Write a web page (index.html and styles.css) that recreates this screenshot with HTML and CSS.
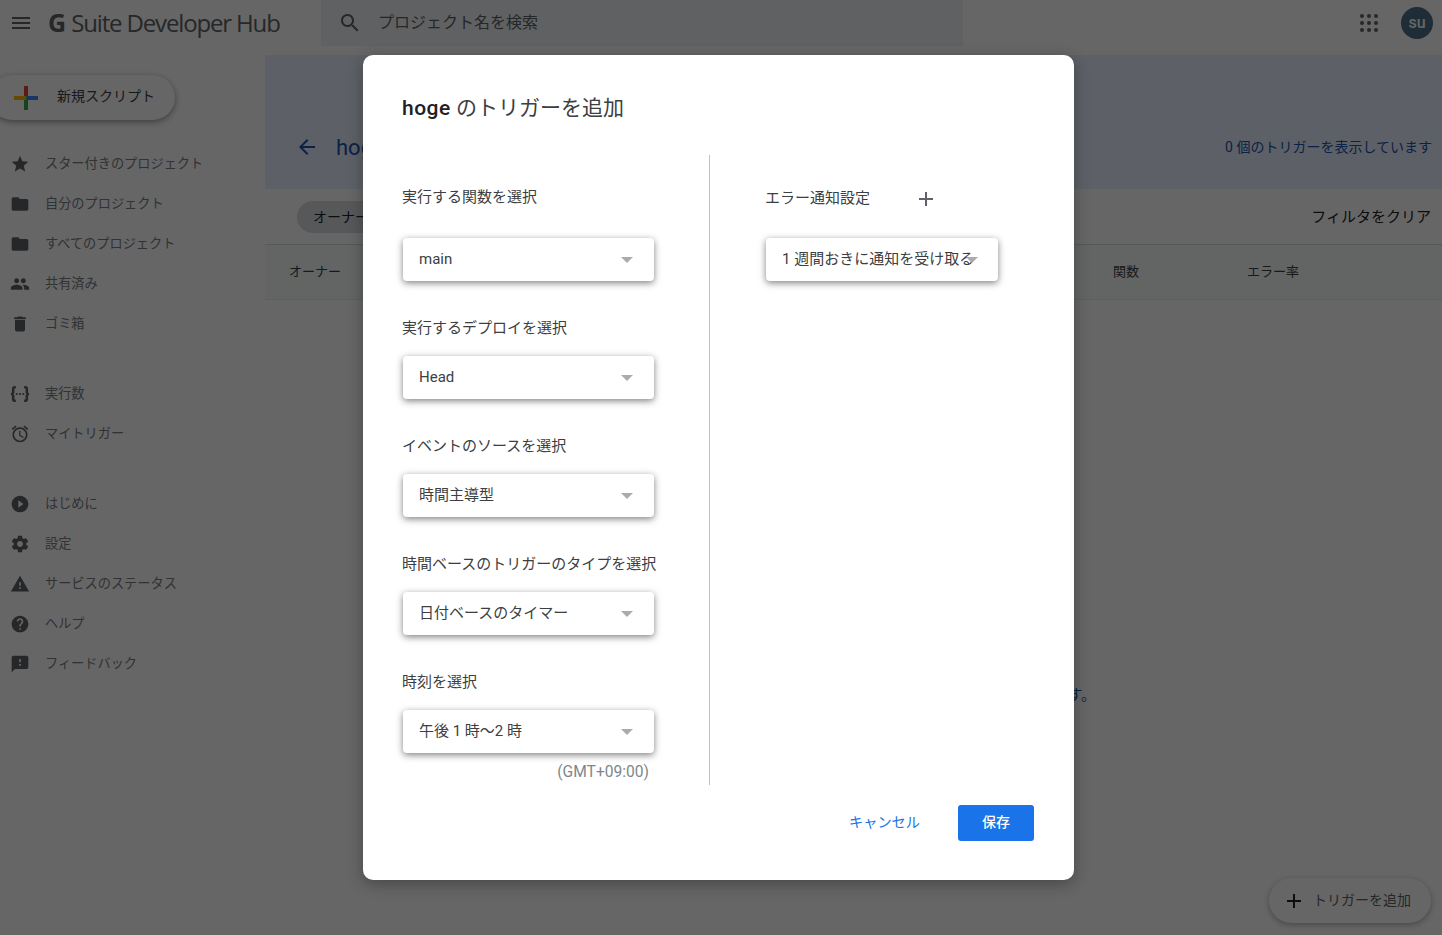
FILE: index.html
```html
<!DOCTYPE html>
<html lang="ja">
<head>
    <meta charset="UTF-8">
    <title>G Suite Developer Hub</title>
    <link rel="stylesheet" href="styles.css">
</head>
<body>
    <header class="topbar">
        <svg class="menu-icon" viewBox="0 0 24 24"><path d="M3 18h18v-2H3v2zm0-5h18v-2H3v2zm0-7v2h18V6H3z"/></svg>
        <div class="logo"><b>G</b> Suite Developer Hub</div>
        <div class="search">
            <svg viewBox="0 0 24 24"><path d="M15.5 14h-.79l-.28-.27C15.41 12.59 16 11.11 16 9.5 16 5.91 13.09 3 9.5 3S3 5.91 3 9.5 5.91 16 9.5 16c1.61 0 3.09-.59 4.23-1.57l.27.28v.79l5 4.99L20.49 19l-4.99-5zm-6 0C7.01 14 5 11.99 5 9.5S7.01 5 9.5 5 14 7.01 14 9.5 11.99 14 9.5 14z"/></svg>
            <span>プロジェクト名を検索</span>
        </div>
        <svg class="apps-icon" viewBox="0 0 18 18">
            <circle cx="2" cy="2" r="2"/><circle cx="9" cy="2" r="2"/><circle cx="16" cy="2" r="2"/>
            <circle cx="2" cy="9" r="2"/><circle cx="9" cy="9" r="2"/><circle cx="16" cy="9" r="2"/>
            <circle cx="2" cy="16" r="2"/><circle cx="9" cy="16" r="2"/><circle cx="16" cy="16" r="2"/>
        </svg>
        <div class="avatar">su</div>
    </header>

    <div class="content">
        <aside class="sidebar">
            <div class="new-script">
                <svg viewBox="0 0 24 24">
                    <rect x="10" y="0" width="4" height="12" fill="#ea4335"/>
                    <rect x="12" y="10" width="12" height="4" fill="#4285f4"/>
                    <rect x="10" y="12" width="4" height="12" fill="#34a853"/>
                    <rect x="0" y="10" width="12" height="4" fill="#fbbc04"/>
                </svg>
                <span>新規スクリプト</span>
            </div>
            <nav class="nav-group">
                <a class="nav-item"><svg viewBox="0 0 24 24"><path d="M12 17.27L18.18 21l-1.64-7.03L22 9.24l-7.19-.61L12 2 9.19 8.63 2 9.24l5.46 4.73L5.82 21z"/></svg>スター付きのプロジェクト</a>
                <a class="nav-item"><svg viewBox="0 0 24 24"><path d="M10 4H4c-1.1 0-1.99.9-1.99 2L2 18c0 1.1.9 2 2 2h16c1.1 0 2-.9 2-2V8c0-1.1-.9-2-2-2h-8l-2-2z"/></svg>自分のプロジェクト</a>
                <a class="nav-item"><svg viewBox="0 0 24 24"><path d="M10 4H4c-1.1 0-1.99.9-1.99 2L2 18c0 1.1.9 2 2 2h16c1.1 0 2-.9 2-2V8c0-1.1-.9-2-2-2h-8l-2-2z"/></svg>すべてのプロジェクト</a>
                <a class="nav-item"><svg viewBox="0 0 24 24"><path d="M16 11c1.66 0 2.99-1.34 2.99-3S17.66 5 16 5c-1.66 0-3 1.34-3 3s1.34 3 3 3zm-8 0c1.66 0 2.99-1.34 2.99-3S9.66 5 8 5C6.34 5 5 6.34 5 8s1.34 3 3 3zm0 2c-2.33 0-7 1.17-7 3.5V19h14v-2.5c0-2.33-4.67-3.5-7-3.5zm8 0c-.29 0-.62.02-.97.05 1.16.84 1.97 1.97 1.97 3.45V19h6v-2.5c0-2.33-4.67-3.5-7-3.5z"/></svg>共有済み</a>
                <a class="nav-item"><svg viewBox="0 0 24 24"><path d="M6 19c0 1.1.9 2 2 2h8c1.1 0 2-.9 2-2V7H6v12zM19 4h-3.5l-1-1h-5l-1 1H5v2h14V4z"/></svg>ゴミ箱</a>
            </nav>
            <nav class="nav-group">
                <a class="nav-item"><svg class="exec-icon" viewBox="0 0 24 24"><path d="M7 4H5.500C4.400 4 3.800 4.700 3.800 5.700V10L2.500 12l1.300 2v4.300c0 1 .6 1.700 1.700 1.700H7M17 4h1.500c1.100 0 1.700.7 1.700 1.700V10l1.300 2-1.300 2v4.300c0 1-.6 1.700-1.700 1.700H17"/><circle cx="8" cy="12" r="1.300"/><circle cx="12" cy="12" r="1.300"/><circle cx="16" cy="12" r="1.300"/></svg>実行数</a>
                <a class="nav-item"><svg viewBox="0 0 24 24"><path d="M22 5.72l-4.6-3.86-1.29 1.53 4.6 3.86L22 5.72zM7.88 3.39L6.6 1.86 2 5.71l1.29 1.53 4.59-3.85zM12.5 8H11v6l4.75 2.85.75-1.23-4-2.37V8zM12 4c-4.97 0-9 4.03-9 9s4.02 9 9 9c4.97 0 9-4.03 9-9s-4.03-9-9-9zm0 16c-3.87 0-7-3.13-7-7s3.13-7 7-7 7 3.13 7 7-3.13 7-7 7z"/></svg>マイトリガー</a>
            </nav>
            <nav class="nav-group">
                <a class="nav-item"><svg viewBox="0 0 24 24"><path d="M12 2C6.48 2 2 6.48 2 12s4.48 10 10 10 10-4.48 10-10S17.52 2 12 2zm-2 14.500v-9l6 4.500-6 4.500z"/></svg>はじめに</a>
                <a class="nav-item"><svg viewBox="0 0 24 24"><path d="M19.43 12.98c.04-.32.07-.64.07-.98s-.03-.66-.07-.98l2.11-1.65c.19-.15.24-.42.12-.64l-2-3.46c-.12-.22-.39-.3-.61-.22l-2.49 1c-.52-.4-1.08-.73-1.69-.98l-.38-2.65C14.46 2.18 14.25 2 14 2h-4c-.25 0-.46.18-.49.42l-.38 2.65c-.61.25-1.17.59-1.69.98l-2.49-1c-.23-.09-.49 0-.61.22l-2 3.46c-.13.22-.07.49.12.64l2.11 1.65c-.04.32-.07.65-.07.98s.03.66.07.98l-2.11 1.65c-.19.15-.24.42-.12.64l2 3.46c.12.22.39.3.61.22l2.49-1c.52.4 1.08.73 1.69.98l.38 2.65c.03.24.24.42.49.42h4c.25 0 .46-.18.49-.42l.38-2.65c.61-.25 1.17-.59 1.69-.98l2.49 1c.23.09.49 0 .61-.22l2-3.46c.12-.22.07-.49-.12-.64l-2.11-1.65zM12 15.500c-1.93 0-3.500-1.570-3.500-3.500s1.570-3.500 3.500-3.500 3.500 1.570 3.500 3.500-1.570 3.500-3.500 3.500z"/></svg>設定</a>
                <a class="nav-item"><svg viewBox="0 0 24 24"><path d="M1 21h22L12 2 1 21zm12-3h-2v-2h2v2zm0-4h-2v-4h2v4z"/></svg>サービスのステータス</a>
                <a class="nav-item"><svg viewBox="0 0 24 24"><path d="M12 2C6.48 2 2 6.48 2 12s4.48 10 10 10 10-4.48 10-10S17.52 2 12 2zm1 17h-2v-2h2v2zm2.070-7.750l-.9.920C13.450 12.900 13 13.500 13 15h-2v-.5c0-1.100.450-2.100 1.170-2.830l1.240-1.260c.370-.360.590-.860.590-1.410 0-1.100-.9-2-2-2s-2 .9-2 2H8c0-2.210 1.790-4 4-4s4 1.790 4 4c0 .880-.360 1.680-.930 2.250z"/></svg>ヘルプ</a>
                <a class="nav-item"><svg viewBox="0 0 24 24"><path d="M20 2H4c-1.100 0-1.990.9-1.990 2L2 22l4-4h14c1.100 0 2-.9 2-2V4c0-1.100-.9-2-2-2zm-7 12h-2v-2h2v2zm0-4h-2V6h2v4z"/></svg>フィードバック</a>
            </nav>
        </aside>

        <main class="main">
            <section class="hero">
                <svg viewBox="0 0 24 24"><path d="M20 11H7.830l5.590-5.590L12 4l-8 8 8 8 1.410-1.410L7.830 13H20v-2z"/></svg>
                <h2>hoge</h2>
                <p>0 個のトリガーを表示しています</p>
            </section>
            <div class="filter-row">
                <span class="chip">オーナー: 自分</span>
                <span class="clear">フィルタをクリア</span>
            </div>
            <div class="table-head">
                <span>オーナー</span>
                <span>関数</span>
                <span>エラー率</span>
            </div>
            <p class="empty">トリガーはまだありません。新しいトリガーを追加するには、右下のボタンをクリックします。</p>
        </main>
    </div>

    <div class="add-trigger">
        <svg viewBox="0 0 24 24"><path d="M19 13h-6v6h-2v-6H5v-2h6V5h2v6h6v2z"/></svg>
        <span>トリガーを追加</span>
    </div>

    <div class="overlay"></div>

    <div class="dialog">
        <h1><b>hoge</b> のトリガーを追加</h1>
        <div class="dialog-body">
            <div class="col-left">
                <div class="field first">
                    <label>実行する関数を選択</label>
                    <div class="select">main<i></i></div>
                </div>
                <div class="field">
                    <label>実行するデプロイを選択</label>
                    <div class="select">Head<i></i></div>
                </div>
                <div class="field">
                    <label>イベントのソースを選択</label>
                    <div class="select">時間主導型<i></i></div>
                </div>
                <div class="field">
                    <label>時間ベースのトリガーのタイプを選択</label>
                    <div class="select">日付ベースのタイマー<i></i></div>
                </div>
                <div class="field last">
                    <label>時刻を選択</label>
                    <div class="select">午後 1 時～2 時<i></i></div>
                    <div class="tz">(GMT+09:00)</div>
                </div>
            </div>
            <div class="col-right">
                <div class="error-head">
                    <label>エラー通知設定</label>
                    <svg viewBox="0 0 24 24"><path d="M19 13h-6v6h-2v-6H5v-2h6V5h2v6h6v2z"/></svg>
                </div>
                <div class="select narrow">1 週間おきに通知を受け取る<i></i></div>
            </div>
        </div>
        <div class="dialog-footer">
            <a class="cancel">キャンセル</a>
            <button class="save">保存</button>
        </div>
    </div>
</body>
</html>
```

FILE: styles.css
```css
* {
    box-sizing: border-box;
}
html, body {
    height: 100%;
}
body {
    margin: 0;
    overflow: hidden;
    background-color: #fff;
    color: #3c4043;
    font-family: Roboto, "Noto Sans CJK JP", sans-serif;
}
h1, h2, p {
    margin: 0;
    font-weight: normal;
}

/* top bar */
.topbar {
    display: flex;
    align-items: flex-start;
    height: 55px;
    padding: 0 9px;
    background-color: #fff;
}
.menu-icon {
    flex: none;
    width: 24px;
    height: 24px;
    margin-top: 11px;
    fill: #5f6368;
}
.logo {
    flex: none;
    width: 273px;
    margin-left: 15px;
    font-family: "Open Sans", sans-serif;
    font-size: 24px;
    line-height: 44px;
    letter-spacing: -1.15px;
    white-space: nowrap;
    color: #5f6368;
}
.logo b {
    font-size: 25px;
    font-weight: 700;
    letter-spacing: 0;
}
.search {
    flex: none;
    display: flex;
    align-items: center;
    gap: 16px;
    width: 642px;
    height: 46px;
    padding-left: 17px;
    background-color: #f1f3f4;
    font-size: 16px;
    color: #5f6368;
}
.search svg {
    width: 24px;
    height: 24px;
    fill: #5f6368;
}
.search span {
    margin-bottom: 4px;
}
.apps-icon {
    flex: none;
    width: 18px;
    height: 18px;
    margin: 14px 0 0 397px;
    fill: #5f6368;
}
.avatar {
    flex: none;
    width: 32px;
    height: 32px;
    margin: 7px 0 0 23px;
    border-radius: 50%;
    background-color: #4b7089;
    color: #fff;
    font-size: 16px;
    font-weight: 500;
    line-height: 32px;
    text-align: center;
}

/* layout */
.content {
    display: flex;
    height: 880px;
}
.sidebar {
    flex: none;
    width: 265px;
    padding-top: 20px;
}
.main {
    flex: 1;
    min-width: 0;
}

/* sidebar */
.new-script {
    display: flex;
    align-items: center;
    width: 185px;
    height: 45px;
    margin: 0 0 23px -10px;
    padding-left: 24px;
    border-radius: 23px;
    background-color: #fff;
    box-shadow: 0 2px 6px rgba(0,0,0,0.4);
    font-size: 14px;
    color: #3c4043;
}
.new-script svg {
    width: 24px;
    height: 24px;
    margin-right: 19px;
}
.new-script span {
    margin-bottom: 5px;
}
.nav-group {
    margin-bottom: 30px;
}
.nav-item {
    display: flex;
    align-items: center;
    height: 40px;
    padding: 0 0 2px 10px;
    font-size: 13.2px;
    color: #7a7d82;
}
.nav-item svg {
    flex: none;
    width: 20px;
    height: 20px;
    margin: 4px 15px 0 0;
    fill: #5f6368;
}
.nav-item .exec-icon path {
    fill: none;
    stroke: #5f6368;
    stroke-width: 3;
}

/* main */
.hero {
    display: flex;
    align-items: center;
    height: 134px;
    padding: 50px 10px 0 30px;
    background-color: #e8f0fe;
    color: #1a56b0;
}
.hero svg {
    width: 24px;
    height: 24px;
    fill: #1a56b0;
}
.hero h2 {
    margin-left: 17px;
    font-size: 22px;
}
.hero p {
    margin: 0 0 2px auto;
    font-size: 14px;
}
.filter-row {
    display: flex;
    align-items: center;
    justify-content: space-between;
    height: 56px;
    padding: 0 11px 0 32px;
    border-bottom: 1px solid #dadce0;
}
.chip {
    width: 140px;
    height: 32px;
    padding-left: 16px;
    border-radius: 16px;
    background-color: #dadce0;
    font-size: 14px;
    line-height: 32px;
    color: #202124;
}
.clear {
    margin-bottom: 2px;
    font-size: 15px;
    color: #202124;
}
.table-head {
    display: grid;
    grid-template-columns: 824px 134px 1fr;
    align-items: center;
    height: 55px;
    padding: 0 0 4px 24px;
    border-bottom: 1px solid #e8eaed;
    background-color: #f8f9fa;
    font-size: 13px;
    color: #3c4043;
}
.empty {
    margin-top: 384px;
    padding-right: 346px;
    font-size: 15px;
    line-height: 22px;
    text-align: right;
    color: #1a56b0;
}
.add-trigger {
    position: absolute;
    right: 11px;
    bottom: 12px;
    display: flex;
    align-items: center;
    width: 162px;
    height: 45px;
    padding-left: 13px;
    border-radius: 23px;
    background-color: #fff;
    box-shadow: 0 2px 6px rgba(0,0,0,0.3);
    font-size: 14px;
    color: #5f6368;
}
.add-trigger svg {
    width: 24px;
    height: 24px;
    margin-right: 7px;
    fill: #202124;
}
.add-trigger span {
    margin-bottom: 4px;
}

/* dialog */
.overlay {
    position: absolute;
    inset: 0;
    background-color: rgba(0,0,0,0.6);
}
.dialog {
    position: absolute;
    top: 55px;
    left: 363px;
    width: 711px;
    height: 825px;
    padding: 39px 40px 0 39px;
    border-radius: 10px;
    background-color: #fff;
    box-shadow: 0 4px 16px rgba(0,0,0,0.3);
}
.dialog h1 {
    height: 28px;
    margin-bottom: 33px;
    font-size: 21px;
    line-height: 28px;
    color: #3c4043;
}
.dialog h1 b {
    font-weight: 500;
    letter-spacing: 0.5px;
    color: #202124;
}
.dialog-body {
    display: flex;
    height: 630px;
}
.col-left {
    flex: none;
    width: 307px;
    padding-top: 32px;
}
.col-right {
    flex: 1;
    padding: 31px 0 0 55px;
    border-left: 1px solid #bdc1c6;
}
label {
    display: block;
    font-size: 15px;
    line-height: 20px;
    color: #3c4043;
}
.field {
    margin-bottom: 36px;
}
.field.last {
    margin-bottom: 0;
}
.field label {
    margin-bottom: 18px;
    padding-top: 1px;
    white-space: nowrap;
}
.field.first label {
    margin-bottom: 31px;
    padding-top: 0;
}
.select {
    position: relative;
    width: 251px;
    height: 43px;
    margin-left: 1px;
    padding-left: 16px;
    border-radius: 4px;
    background-color: #fff;
    box-shadow: 0 2px 7px rgba(0,0,0,0.5);
    font-size: 15px;
    line-height: 42px;
    white-space: nowrap;
    color: #3c4043;
}
.select.narrow {
    width: 232px;
}
.select i {
    position: absolute;
    top: 19px;
    right: 21px;
    border-top: 6px solid #a9abad;
    border-left: 6px solid transparent;
    border-right: 6px solid transparent;
}
.select.narrow i {
    right: 20px;
}
.tz {
    width: 247px;
    margin-top: 9px;
    font-size: 15.6px;
    line-height: 20px;
    text-align: right;
    color: #80868b;
}
.error-head {
    display: flex;
    align-items: center;
    height: 24px;
    margin-bottom: 28px;
}
.error-head label {
    width: 105px;
}
.error-head svg {
    width: 24px;
    height: 24px;
    margin: 2px 0 0 44px;
    fill: #5f6368;
}
.dialog-footer {
    display: flex;
    align-items: center;
    justify-content: flex-end;
    gap: 38px;
    margin-top: 20px;
}
.cancel {
    margin-bottom: 4px;
    font-size: 14.2px;
    color: #1a73e8;
}
.save {
    width: 76px;
    height: 36px;
    padding: 0 0 4px;
    border: none;
    border-radius: 3px;
    background-color: #1a73e8;
    color: #fff;
    font-family: inherit;
    font-size: 14px;
    font-weight: 500;
}
```
